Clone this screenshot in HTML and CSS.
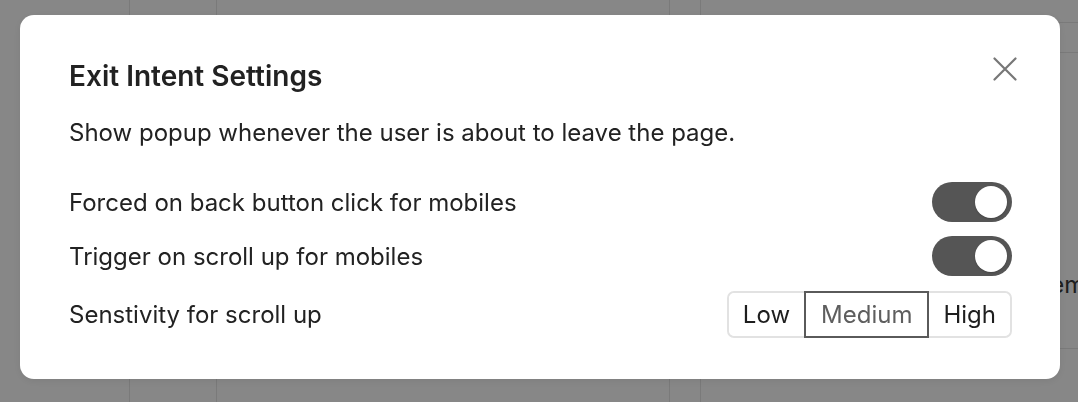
FILE: index.html
```html
<!DOCTYPE html>
<html lang="en">
<head>
<meta charset="utf-8">
<title>Exit Intent Settings</title>
<link rel="stylesheet" href="styles.css">
</head>
<body>
<div class="page">
  <div class="col col-a"></div>
  <div class="col col-b"></div>
  <div class="col col-c"></div>
  <div class="col col-d"></div>
  <div class="col col-e">
    <div class="e-row e-top"></div>
    <div class="e-row e-head"></div>
    <div class="e-body"><span class="e-text">Element</span></div>
    <div class="e-row e-foot"></div>
  </div>
</div>
<div class="overlay">
  <div class="modal">
    <div class="modal-head">
      <h2 class="title">Exit Intent Settings</h2>
      <button class="close" aria-label="Close">
        <svg width="24" height="24" viewBox="0 0 24 24" fill="none" stroke="#777777" stroke-width="2.2" stroke-linecap="round"><path d="M1.5 1.5L22.5 22.5M22.5 1.5L1.5 22.5"/></svg>
      </button>
    </div>
    <p class="desc">Show popup whenever the user is about to leave the page.</p>
    <div class="rows">
      <div class="row">
        <span class="label">Forced on back button click for mobiles</span>
        <span class="toggle on"><span class="knob"></span></span>
      </div>
      <div class="row">
        <span class="label">Trigger on scroll up for mobiles</span>
        <span class="toggle on"><span class="knob"></span></span>
      </div>
      <div class="row row-last">
        <span class="label">Senstivity for scroll up</span>
        <div class="segmented">
          <button class="seg">Low</button>
          <button class="seg active">Medium</button>
          <button class="seg">High</button>
        </div>
      </div>
    </div>
  </div>
</div>
</body>
</html>
```
FILE: styles.css
```css
* { box-sizing: border-box; }
html, body { margin: 0; padding: 0; }
body {
  width: 1078px;
  height: 402px;
  overflow: hidden;
  font-family: Inter, "Noto Sans", sans-serif;
  background: #ffffff;
  color: #222;
}
.page {
  display: flex;
  height: 402px;
}
.col { height: 100%; }
.col-a { width: 130px; border-right: 1px solid #e6e6e6; }
.col-b { width: 87px; border-right: 1px solid #e6e6e6; }
.col-c { width: 453px; border-right: 1px solid #e6e6e6; }
.col-d { width: 31px; border-right: 1px solid #e6e6e6; }
.col-e { flex: 1; display: flex; flex-direction: column; overflow: hidden; }
.e-top { height: 23px; border-bottom: 1px solid #e6e6e6; }
.e-head { height: 30px; border-bottom: 1px solid #e6e6e6; }
.e-body {
  height: 296px;
  border-bottom: 1px solid #e6e6e6;
  display: flex;
  align-items: flex-start;
  padding: 216px 0 0 329px;
  white-space: nowrap;
}
.e-text { font-size: 24px; line-height: 32px; color: #3a3a3a; }
.overlay {
  position: fixed;
  inset: 0;
  background: rgba(0, 0, 0, 0.47);
  padding: 15px 18px 23px 20px;
}
.modal {
  width: 1040px;
  height: 364px;
  background: #fff;
  border-radius: 14px;
  padding: 43px 48px 0 49px;
  box-shadow: 0 2px 8px rgba(0,0,0,0.08);
}
.modal-head {
  display: flex;
  justify-content: space-between;
  align-items: flex-start;
}
.title {
  margin: 0;
  font-size: 28px;
  font-weight: 600;
  line-height: 36px;
  color: #222;
}
.close {
  border: 0;
  background: none;
  padding: 0;
  margin: -1px -5px 0 0;
  width: 24px;
  height: 24px;
  cursor: pointer;
}
.close svg { display: block; }
.desc {
  margin: 23px 0 0;
  font-size: 24px;
  line-height: 32px;
  color: #222;
}
.rows {
  margin-top: 33px;
  display: flex;
  flex-direction: column;
  gap: 14px;
}
.row {
  display: flex;
  justify-content: space-between;
  align-items: center;
  min-height: 40px;
}
.row-last { margin-top: 1px; }
.label {
  font-size: 24px;
  color: #222;
}
.toggle {
  width: 80px;
  height: 40px;
  border-radius: 20px;
  background: #555555;
  display: flex;
  align-items: center;
  justify-content: flex-end;
  padding: 0 5px;
}
.knob {
  width: 32px;
  height: 32px;
  border-radius: 50%;
  background: #fff;
  box-shadow: 0 1px 2px rgba(0,0,0,0.2);
}
.segmented {
  display: flex;
  border: 2px solid #e2e2e2;
  border-radius: 7px;
  height: 47px;
}
.seg {
  font-family: inherit;
  font-size: 24px;
  background: #fff;
  border: 0;
  color: #1e1e1e;
  padding: 0 14px;
  height: 100%;
  border-radius: 6px;
}
.seg.active {
  border: 2px solid #5a5a5a;
  border-radius: 0;
  color: #5e5e5e;
  margin: -2px 0;
  height: calc(100% + 4px);
  padding: 0 15px;
}
```
